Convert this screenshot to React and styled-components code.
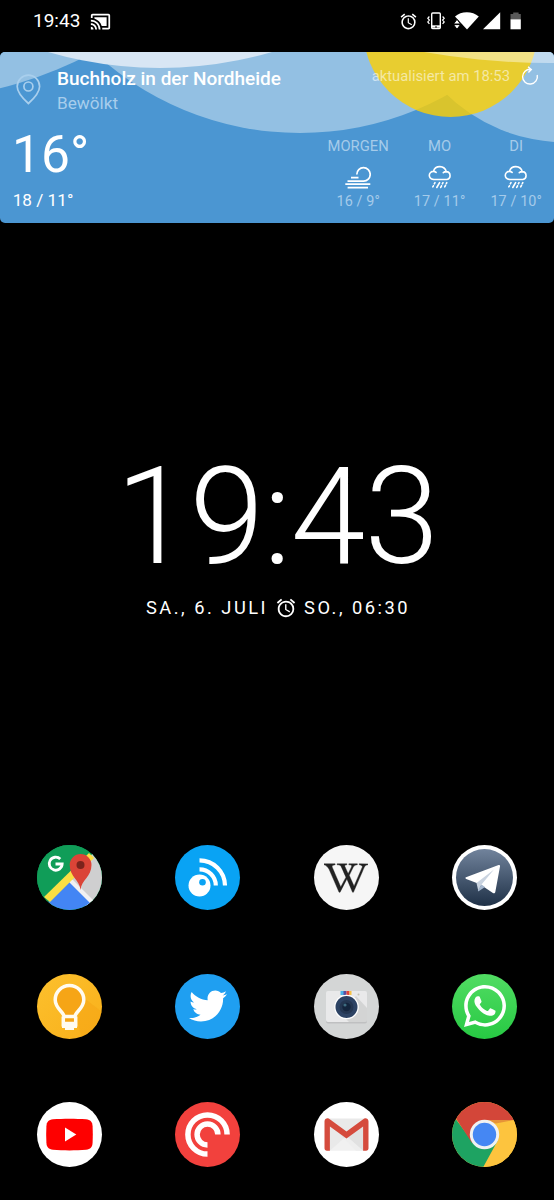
import React from 'react';
import styled, { createGlobalStyle } from 'styled-components';
import { FaTwitter, FaWhatsapp, FaWikipediaW } from 'react-icons/fa';
import { MdAlarm, MdCastConnected } from 'react-icons/md';

const GlobalStyle = createGlobalStyle`
  * { box-sizing: border-box; }
  body { margin: 0; background: #000; }
`;

const Screen = styled.main`
  width: 554px;
  height: 1200px;
  overflow: hidden;
  background: #000;
  color: #fff;
  font-family: Roboto, 'Liberation Sans', sans-serif;
  svg { display: block; }
`;

const StatusBar = styled.header`
  display: flex;
  justify-content: space-between;
  align-items: center;
  height: 52px;
  padding: 0 33px 10px 33px;
`;

const StatusGroup = styled.div`
  display: flex;
  align-items: center;
  gap: ${(p) => p.$gap}px;
`;

const StatusTime = styled.span`
  font-size: 19px;
  line-height: 22px;
`;

const WeatherCard = styled.section`
  position: relative;
  height: 171px;
  border-radius: 5px;
  overflow: hidden;
  background: #4b96d2;
`;

const SkyArt = styled.svg`
  position: absolute;
  top: 0;
  left: 0;
`;

const CardHeader = styled.div`
  position: relative;
  display: flex;
  height: 75px;
  padding: 12px 15px 0 16px;
`;

const PinSlot = styled.div`
  width: 25px;
  padding-top: 10px;
`;

const Place = styled.div`
  flex: 1;
  padding: 3px 0 0 16px;
`;

const PlaceName = styled.div`
  font-size: 19px;
  font-weight: 500;
  line-height: 24px;
  white-space: nowrap;
`;

const Condition = styled.div`
  font-size: 17.2px;
  line-height: 24px;
  color: #a7cdec;
`;

const Updated = styled.div`
  display: flex;
  align-items: center;
  gap: 11px;
  height: 24px;
  font-size: 14.8px;
  line-height: 24px;
  color: rgba(255, 255, 255, 0.56);
  white-space: nowrap;
`;

const CardBody = styled.div`
  position: relative;
  display: flex;
  justify-content: space-between;
  padding: 0 12px 0 12px;
`;

const CurrentTemp = styled.div`
  font-size: 51.5px;
  line-height: 56px;
`;

const CurrentRange = styled.div`
  margin-top: 5px;
  padding-left: 0.7px;
  font-size: 17.2px;
  line-height: 24px;
`;

const Forecast = styled.div`
  display: flex;
  gap: 25px;
  padding-top: 9px;
`;

const Day = styled.div`
  display: flex;
  flex-direction: column;
  align-items: center;
  color: #a5cbea;
`;

const DayName = styled.div`
  font-size: 14.8px;
  line-height: 20px;
`;

const DayIcon = styled.div`
  height: 24px;
  margin: 9px 0 4px;
  color: #fff;
`;

const DayRange = styled.div`
  font-size: 14.4px;
  line-height: 18px;
  letter-spacing: 0.1px;
`;

const ClockWidget = styled.section`
  display: flex;
  flex-direction: column;
  align-items: center;
  padding-top: 226px;
`;

const ClockTime = styled.div`
  font-size: 134.5px;
  font-weight: 300;
  line-height: 136px;
  letter-spacing: -0.8px;
`;

const ClockDate = styled.div`
  display: flex;
  align-items: center;
  gap: 7px;
  margin-top: 11px;
  padding-left: 2px;
  font-size: 18.3px;
  line-height: 24px;
  letter-spacing: 2.5px;
  white-space: pre;
`;

const AppGrid = styled.nav`
  display: grid;
  grid-template-columns: repeat(4, 65px);
  grid-auto-rows: 65px;
  gap: 63.7px 73.5px;
  padding: 225px 0 0 36.5px;
`;

const AppIcon = styled.div`
  display: flex;
  align-items: center;
  justify-content: center;
  border-radius: 50%;
  overflow: hidden;
  background: ${(p) => p.$bg};
  color: ${(p) => p.$fg || '#fff'};
`;

const Sky = () => (
  <SkyArt width="554" height="171" viewBox="0 52 554 171">
    <g fill="#93c0e3">
      <circle cx="-96" cy="-300" r="400" />
      <circle cx="300" cy="-170" r="303" />
      <circle cx="566" cy="-30.4" r="172.8" />
    </g>
    <circle cx="450.5" cy="30" r="87" fill="#ffd000" fillOpacity="0.79" />
    <circle cx="160" cy="-332" r="400" fill="#d8e6f4" />
    <circle cx="550" cy="-664" r="727" fill="#fff" fillOpacity="0.42" />
  </SkyArt>
);

const Pin = () => (
  <svg width="25" height="31" viewBox="0 0 25 31" fill="none" stroke="#a9cfed" strokeWidth="1.7">
    <path d="M12.4 29.5C8.6 26 1.2 18.5 1.2 12.4a11.2 11.2 0 0 1 22.4 0C23.6 18.5 16.2 26 12.4 29.5Z" />
    <circle cx="12.4" cy="12.5" r="4.5" />
  </svg>
);

const Refresh = () => (
  <svg width="18" height="20" viewBox="0 0 18 20" fill="none" stroke="#fff" strokeWidth="1.4">
    <path d="M9.8 3.3A7.4 7.4 0 1 0 16.2 9M7 .8l3.3 2.7L7.4 6.6" />
  </svg>
);

const WindIcon = () => (
  <svg width="26" height="24" viewBox="0 0 26 24" fill="none" stroke="currentColor" strokeWidth="1.7">
    <path d="M6 12.7h7.5M11.8 9.4a6.7 6.7 0 1 1 6.8 6.7H2.5M.3 19.2h25M2.6 22.6H23" />
  </svg>
);

const RainIcon = () => (
  <svg width="24" height="24" viewBox="0 0 24 24" fill="none" stroke="currentColor" strokeWidth="1.6" strokeLinecap="round">
    <path d="M5.2 14.4a4 4 0 0 1 .2-8A6.7 6.7 0 0 1 18.3 6.6a4 4 0 0 1 .6 7.9H5.2M5.4 6.4c1.2 0 2 .4 2.7 1M18.3 6.6c-1.2 0-2.2.3-3 1" />
    <path d="M7 17.6l-.7 1.200M5.400 20.800l-.6 1M11.600 17.600l-2.800 4.900M15 17.600l-.7 1.200M13.500 20.800l-.8 1.700M18.800 17.600l-.5 1M17.500 20.300l-.8 1.600" />
  </svg>
);

const StatusVibrate = () => (
  <svg width="18" height="18" viewBox="0 0 18 18" fill="none" stroke="#fff" strokeWidth="1.4">
    <rect x="4.7" y="1" width="8.6" height="15.6" rx="1" />
    <path d="M5 14.5h8" strokeWidth="2.4" />
    <path d="M8 15h2" stroke="#000" strokeWidth="1" />
    <path d="M2.4 4.5L.8 6.3l1.6 1.8L.8 9.9l1.6 2M15.6 4.5l1.6 1.8-1.6 1.8 1.6 1.8-1.6 2" strokeWidth="1.2" />
  </svg>
);

const StatusSignals = () => (
  <svg width="67" height="18" viewBox="0 0 67 18" fill="#fff">
    <path d="M1 4.5C7-1.2 18.5-1.2 24.8 4.5L13 17.5Z" />
    <path d="M-.5 12l3.500-4.700L6.500 12zM-.5 12.600l3.500 4.700 3.500-4.700z" stroke="#000" strokeWidth="1" />
    <path d="M46.2.3v17H29Z" />
    <path d="M59.2.5h5.400V2h2.200v5.500H56.500V2h2.700z" fill="#585858" />
    <path d="M56.5 7.3h10.300v10H56.500z" />
  </svg>
);

const AppSvg = ({ children }) => (
  <svg width="65" height="65" viewBox="0 0 65 65">{children}</svg>
);

const MapsIcon = () => (
  <AppSvg>
    <path fill="#109d58" d="M0 0h65v65H0z" />
    <path fill="#cfcfd0" d="M65 6v59H50L34 36 56 8Z" />
    <path fill="#f1f1f2" d="M30 39l5-5 22 22-5 6Z" />
    <path fill="#4385f4" d="M32 37l26 26v6H4v-5Z" />
    <path fill="#fbdf43" d="M52 8l5 5L13 57l-6-5Z" />
    <path fill="#db4437" d="M43.5 45c-.8-10-10.8-13-10.8-25a10.900 10.900 0 0 1 21.800 0c0 12-10.200 15-11 25Z" />
    <circle cx="43.5" cy="20" r="4" fill="#7b231c" />
    <path d="M23.3 14.1A6.5 6.5 0 1 0 25.2 19H18.5" fill="none" stroke="#fff" strokeWidth="2.8" />
  </AppSvg>
);

const InoreaderIcon = () => (
  <AppSvg>
    <circle cx="24.5" cy="40.5" r="11" fill="#fff" />
    <circle cx="27.5" cy="37.3" r="3.3" fill="#09a3f4" />
    <g fill="none" stroke="#fff" strokeWidth="4.2">
      <path d="M24.5 15.3A25.5 25.5 0 0 1 50 40.5" />
      <path d="M24.5 24.4A16.3 16.3 0 0 1 40.8 40.5" />
    </g>
  </AppSvg>
);

const TelegramIcon = () => (
  <AppSvg>
    <defs>
      <linearGradient id="tgBg" x1="0" y1="0" x2="0" y2="1">
        <stop offset="0" stopColor="#71839c" />
        <stop offset="1" stopColor="#1f3147" />
      </linearGradient>
    </defs>
    <circle cx="32.5" cy="32.5" r="28.5" fill="url(#tgBg)" />
    <path fill="#fff" d="M14 32.3 46.6 20c1-.3 1.600.4 1.400 1.400L43.300 47c-.3 1.400-1.300 1.700-2.400 1L28 39.300l-13.800-5.400c-1-.4-1-1.200-.2-1.600Z" />
    <path fill="#c9d3e0" d="M24.5 38 42 24.5 29.5 39.5 26.3 46Z" />
    <path fill="#a6b8cf" d="M29.5 39.5l3.500 2.600-6 4c-1 .5-1.200 0-1-.8Z" />
  </AppSvg>
);

const KeepIcon = () => (
  <AppSvg>
    <path d="M40 46 47 24 65 38v27H45Z" fill="#f5a414" opacity=".5" />
    <path
      d="M27 42.5c0-4.5-8.8-7.8-8.800-16.700a14.300 14.300 0 0 1 28.600 0c0 8.900-8.800 12.200-8.800 16.700ZM26.300 42.500V52h12.400v-9.500M26.300 49.500h12.400"
      fill="#f6a516" stroke="#fffbf0" strokeWidth="3.5" strokeLinejoin="round"
    />
    <path d="M25 50h15v4h-3v2h-9v-2h-3z" fill="#fffbf0" />
  </AppSvg>
);

const CameraIcon = () => (
  <AppSvg>
    <rect x="12" y="18.5" width="41" height="31" rx="2" fill="#bfc0c1" />
    <rect x="12" y="17" width="41" height="31" rx="2" fill="#e9e9ea" />
    <path d="M42 22l11 12v14H35l-7-7Z" fill="#c9caca" opacity=".7" />
    <path d="M26.5 17h4v4h-4z" fill="#4ab3e8" />
    <path d="M29.5 17h3v4h-3z" fill="#5a4fa0" />
    <path d="M32.5 17h3v4h-3z" fill="#e0453a" />
    <path d="M35.5 17h2v4h-2z" fill="#f6c244" />
    <circle cx="32.5" cy="33" r="12.3" fill="#fff" />
    <circle cx="32.5" cy="33" r="11" fill="#2d4364" />
    <circle cx="32.5" cy="33" r="7" fill="#243651" />
    <circle cx="32.5" cy="33" r="4.2" fill="#14253d" />
    <circle cx="31" cy="31" r="1.6" fill="#3e6b80" />
    <circle cx="44.5" cy="20.5" r="1" fill="#c3bfae" />
  </AppSvg>
);

const YouTubeIcon = () => (
  <AppSvg>
    <path fill="#fe0000" d="M16 17.3c10-.8 23-.8 33 0 4.500.4 6.300 2.500 6.600 7 .3 5.500.3 11 0 16.500-.3 4.500-2.100 6.600-6.600 7-10 .8-23 .8-33 0-4.500-.4-6.300-2.500-6.600-7-.3-5.500-.3-11 0-16.500.3-4.500 2.100-6.600 6.600-7Z" />
    <path fill="#fff" d="M28 25.5v14L39.3 32.5Z" />
  </AppSvg>
);

const PocketCastsIcon = () => (
  <AppSvg>
    <g fill="none" stroke="#fff" strokeWidth="5.5">
      <path d="M32.5 52.1A19.6 19.6 0 1 1 52.1 32.5" />
      <path d="M32.5 42.9A10.4 10.4 0 1 1 42.9 32.5" />
    </g>
  </AppSvg>
);

const GmailIcon = () => (
  <AppSvg>
    <path fill="#e9e9e9" d="M13 16.5h39v32H13z" />
    <path fill="#dcdcdc" d="M16 22l16.5 14L49 22v26.5H42Z" opacity=".6" />
    <path fill="#f4f4f4" d="M16 48.5 32.5 34 49 48.5z" opacity=".7" />
    <path fill="#d54b3d" d="M10.5 19.5c0-3 3.300-4 5.300-2.300L32.500 29.500l16.700-12.300c2-1.700 5.300-.7 5.300 2.300v26.800c0 1.500-1 2.400-2.400 2.400h-3V24.500L32.500 36.500 15.900 24.500v24.200h-3c-1.400 0-2.400-.9-2.400-2.400Z" />
  </AppSvg>
);

const ChromeIcon = () => (
  <AppSvg>
    <path fill="#fdc43e" d="M32.5 18H65v47H30Z" />
    <path fill="#1ea362" d="M0 12 20 39h25.5L31 65.5H0Z" />
    <path fill="#d34639" d="M4 16.5 0 10V0h65v18H32.5L20 41Z" />
    <path fill="#b93a2f" d="M32.5 18H62l-18 3.5Z" opacity=".35" />
    <circle cx="32.5" cy="32.5" r="14.7" fill="#f1f1f1" />
    <circle cx="32.5" cy="32.5" r="11.7" fill="#4587f3" />
  </AppSvg>
);

const forecast = [
  { day: 'MORGEN', range: '16 / 9°', Icon: WindIcon },
  { day: 'MO', range: '17 / 11°', Icon: RainIcon },
  { day: 'DI', range: '17 / 10°', Icon: RainIcon },
];

const apps = [
  { name: 'maps', bg: '#109d58', icon: <MapsIcon /> },
  { name: 'inoreader', bg: '#09a3f4', icon: <InoreaderIcon /> },
  { name: 'wikipedia', bg: '#f6f6f6', fg: '#222', icon: <FaWikipediaW size={44} stroke="#222" strokeWidth={6} /> },
  { name: 'telegram', bg: '#fff', icon: <TelegramIcon /> },
  { name: 'keep', bg: 'linear-gradient(135deg, #fcc02d, #f9b01a)', icon: <KeepIcon /> },
  { name: 'twitter', bg: '#1f9ff1', icon: <FaTwitter size={38} /> },
  { name: 'camera', bg: '#d4d6d6', icon: <CameraIcon /> },
  { name: 'whatsapp', bg: 'linear-gradient(#51dc63, #27c943)', icon: <FaWhatsapp size={48} /> },
  { name: 'youtube', bg: '#fff', icon: <YouTubeIcon /> },
  { name: 'pocketcasts', bg: '#f2413d', icon: <PocketCastsIcon /> },
  { name: 'gmail', bg: '#fff', icon: <GmailIcon /> },
  { name: 'chrome', bg: '#fdc43e', icon: <ChromeIcon /> },
];

export default function App() {
  return (
    <Screen>
      <GlobalStyle />
      <StatusBar>
        <StatusGroup $gap={10}>
          <StatusTime>19:43</StatusTime>
          <MdCastConnected size={21} />
        </StatusGroup>
        <StatusGroup $gap={9}>
          <MdAlarm size={19} />
          <StatusVibrate />
          <StatusSignals />
        </StatusGroup>
      </StatusBar>

      <WeatherCard>
        <Sky />
        <CardHeader>
          <PinSlot><Pin /></PinSlot>
          <Place>
            <PlaceName>Buchholz in der Nordheide</PlaceName>
            <Condition>Bewölkt</Condition>
          </Place>
          <Updated>
            aktualisiert am 18:53
            <Refresh />
          </Updated>
        </CardHeader>
        <CardBody>
          <div>
            <CurrentTemp>16°</CurrentTemp>
            <CurrentRange>18 / 11°</CurrentRange>
          </div>
          <Forecast>
            {forecast.map(({ day, range, Icon }) => (
              <Day key={day}>
                <DayName>{day}</DayName>
                <DayIcon><Icon /></DayIcon>
                <DayRange>{range}</DayRange>
              </Day>
            ))}
          </Forecast>
        </CardBody>
      </WeatherCard>

      <ClockWidget>
        <ClockTime>19:43</ClockTime>
        <ClockDate>
          <span>SA., 6. JULI</span>
          <MdAlarm size={22} />
          <span>SO., 06:30</span>
        </ClockDate>
      </ClockWidget>

      <AppGrid>
        {apps.map((app) => (
          <AppIcon key={app.name} $bg={app.bg} $fg={app.fg}>{app.icon}</AppIcon>
        ))}
      </AppGrid>
    </Screen>
  );
}
